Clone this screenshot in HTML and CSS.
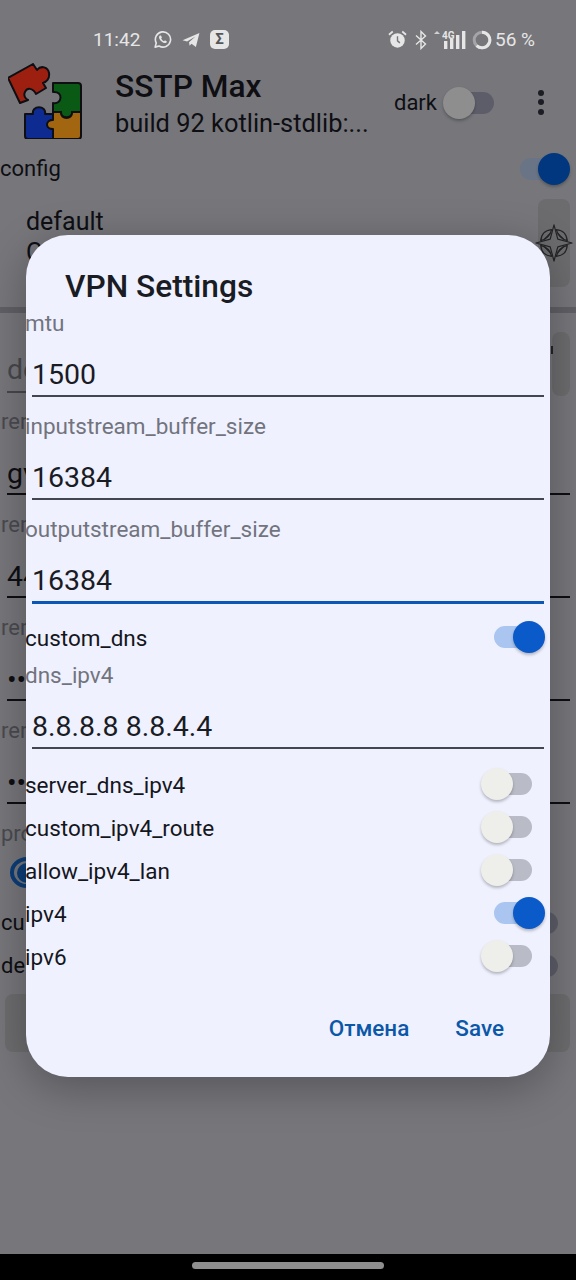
FILE: index.html
```html
<!DOCTYPE html>
<html lang="en">
<head>
<meta charset="utf-8">
<title>SSTP Max</title>
<link rel="stylesheet" href="styles.css">
</head>
<body>
<div class="screen">
  <div class="status">
    <span class="status-time">11:42</span>
    <svg class="si si-wa" viewBox="0 0 20 20"><path d="M2.2 18 3.4 13.6A8 8 0 1 1 6.4 16.8Z" fill="none" stroke="#e6e6e6" stroke-width="1.7" stroke-linejoin="round"/><path d="M7.2 5.8C6.2 6.6 6 8 7 9.8 8.2 12 10.4 13.6 12.4 13.8 13.6 13.8 14.6 13 14.6 12L12.6 10.9 11.6 11.9C10.4 11.4 9.2 10.2 8.6 9L9.4 8 8.4 5.8Z" fill="#e6e6e6"/></svg>
    <svg class="si si-tg" viewBox="0 0 20 18"><path d="M0.5 9.2 19.5 1 15.5 17 10.6 13.2 8.4 15.6 7.8 11.6 15 5 5.6 10.8Z" fill="#e6e6e6"/></svg>
    <span class="si-sigma">Σ</span>
    <span class="status-gap"></span>
    <svg class="si si-alarm" viewBox="0 0 20 20"><circle cx="10" cy="11" r="7.6" fill="#e6e6e6"/><path d="M10 6.5V11.5L12.5 13.5" fill="none" stroke="#76777c" stroke-width="1.5"/><path d="M1 5 5 1.6M19 5 15 1.6" stroke="#e6e6e6" stroke-width="1.8"/></svg>
    <svg class="si si-bt" viewBox="0 0 12 20"><path d="M1 5.5 10.5 14 6 18.5V1.5L10.5 6 1 14.5" fill="none" stroke="#e6e6e6" stroke-width="1.4"/></svg>
    <svg class="si si-signal" viewBox="0 0 33 20"><path d="M0 4 3 1 6 4Z" fill="#d0d0d0"/><text x="8" y="8.5" class="si-4g">4G</text><rect x="10" y="11" width="3.4" height="8" fill="#e6e6e6"/><rect x="16" y="9" width="3.4" height="10" fill="#e6e6e6"/><rect x="22" y="5" width="3.4" height="14" fill="#e6e6e6"/><rect x="28" y="1" width="3.4" height="18" fill="#e6e6e6"/></svg>
    <svg class="si si-ring" viewBox="0 0 20 20"><circle cx="10" cy="10" r="7.8" fill="none" stroke="#a4a5a8" stroke-width="3"/><path d="M10 2.2A7.8 7.8 0 1 1 4.6 15.6" fill="none" stroke="#e6e6e6" stroke-width="3"/></svg>
    <span class="status-batt">56 %</span>
  </div>

  <div class="app">
    <header class="app-head">
      <svg class="logo" viewBox="8 13 76 76">
        <g stroke="#15161c" stroke-width="2" stroke-linejoin="round">
          <path d="M8 28 33 14 37 20C41 15 48 17 49 23 50 29 46 32 43 33L46 38 36 44C33 38 27 37 25 42 23 46 26 49 28 50L20 53Z" fill="#e62f18"/>
          <path d="M53 33H78Q81 33 81 36V62H72C73 69 60 69 61 62H53V53C62 55 64 41 53 42Z" fill="#108520"/>
          <path d="M25 64H33C31 55 47 55 45 64H53V70C46 69 46 80 53 79V89H28Q25 89 25 86Z" fill="#1540d8"/>
          <path d="M53 70V62H61C60 70 73 70 72 62H81V86Q81 89 78 89H53V79C45 79 45 70 53 70Z" fill="#ef9618"/>
        </g>
      </svg>
      <div class="head-text">
        <div class="app-title">SSTP Max</div>
        <div class="app-sub">build 92 kotlin-stdlib:...</div>
      </div>
      <span class="text-main">dark</span>
      <span class="sw sw-off sw-dim sw-dark"><i></i></span>
      <span class="kebab"><i></i><i></i><i></i></span>
    </header>

    <div class="row-config">
      <span class="text-main">config</span>
      <span class="sw sw-on sw-dim"><i></i></span>
    </div>

    <div class="row-profile">
      <div class="profile-text">default<br>C</div>
      <div class="icon-btn">
        <svg class="compass" viewBox="0 0 40 40"><g fill="none" stroke="#35363a" stroke-width="1.3" stroke-linejoin="round"><path d="M20 1 24 16 39 20 24 24 20 39 16 24 1 20 16 16Z"/><path d="M22.5 6C30 7 33 10 34 17.5 28 16 24 12 22.5 6ZM34 22.5C33 30 30 33 22.5 34 24 28 28 24 34 22.5ZM17.5 34C10 33 7 30 6 22.5 12 24 16 28 17.5 34ZM6 17.5C7 10 10 7 17.5 6 16 12 12 16 6 17.5Z"/><path d="M24 10 30 16M30 24 24 30M16 30 10 24M10 16 16 10"/></g></svg>
      </div>
    </div>

    <div class="rule"></div>

    <div class="row-search">
      <div class="bg-value bg-faint">default</div>
      <div class="search-btn"><i></i></div>
    </div>

    <div class="bg-field"><div class="bg-label">rer</div><div class="bg-value">gv</div></div>
    <div class="bg-field"><div class="bg-label">rer</div><div class="bg-value">443</div></div>
    <div class="bg-field"><div class="bg-label">rer</div><div class="bg-value">••••</div></div>
    <div class="bg-field"><div class="bg-label">rer</div><div class="bg-value">••••</div></div>

    <div class="bg-label">pro</div>
    <div class="radio-row"><span class="radio"><i></i></span></div>
    <div class="row-bg"><span class="text-main">cu</span><span class="sw sw-off sw-dim sw-dark sw-lo"><i></i></span></div>
    <div class="row-bg"><span class="text-main">de</span><span class="sw sw-off sw-dim sw-dark sw-lo"><i></i></span></div>
    <div class="big-btn"></div>
  </div>

  <div class="navbar"><span class="nav-pill"></span></div>

  <div class="scrim"></div>

  <section class="dialog">
    <h2 class="dialog-title">VPN Settings</h2>

    <div class="field"><div class="field-label">mtu</div><div class="field-value">1500</div></div>
    <div class="field"><div class="field-label">inputstream_buffer_size</div><div class="field-value">16384</div></div>
    <div class="field field-focus"><div class="field-label">outputstream_buffer_size</div><div class="field-value">16384</div></div>

    <div class="opt"><span>custom_dns</span><span class="sw sw-on"><i></i></span></div>

    <div class="field field-tight"><div class="field-label">dns_ipv4</div><div class="field-value">8.8.8.8 8.8.4.4</div></div>

    <div class="opt"><span>server_dns_ipv4</span><span class="sw sw-off"><i></i></span></div>
    <div class="opt"><span>custom_ipv4_route</span><span class="sw sw-off"><i></i></span></div>
    <div class="opt"><span>allow_ipv4_lan</span><span class="sw sw-off"><i></i></span></div>
    <div class="opt"><span>ipv4</span><span class="sw sw-on"><i></i></span></div>
    <div class="opt"><span>ipv6</span><span class="sw sw-off"><i></i></span></div>

    <div class="actions">
      <span class="action">Отмена</span>
      <span class="action">Save</span>
    </div>
  </section>
</div>
</body>
</html>
```

FILE: styles.css
```css
* { box-sizing: border-box; }
html, body { margin: 0; padding: 0; }
body { font-family: Roboto, "Liberation Sans", sans-serif; background: #000; }

.screen {
  width: 576px;
  height: 1280px;
  position: relative;
  overflow: hidden;
  display: flex;
  flex-direction: column;
  background: #aeafb6;
  color: #15161c;
}

/* status bar sits above the scrim */
.status {
  position: relative;
  z-index: 3;
  height: 55px;
  flex: none;
  display: flex;
  align-items: center;
  padding: 24px 41px 0 93px;
  color: #e6e6e6;
  font-size: 19px;
}
.status-time { width: 60px; }
.status-gap { flex: 1; }
.status-batt { margin-left: 3px; }
.si { display: block; flex: none; }
.si-wa { width: 19px; height: 19px; }
.si-tg { width: 18px; height: 16px; margin-left: 10px; }
.si-sigma {
  width: 19px;
  height: 19px;
  margin-left: 10px;
  border-radius: 5px;
  background: #e6e6e6;
  color: #55565a;
  font-size: 15px;
  font-weight: 700;
  line-height: 19px;
  text-align: center;
}
.si-alarm { width: 19px; height: 19px; }
.si-bt { width: 12px; height: 20px; margin-left: 8px; }
.si-signal { width: 33px; height: 20px; margin-left: 7px; }
.si-4g { font-size: 10px; font-weight: 700; fill: #e6e6e6; }
.si-ring { width: 20px; height: 20px; margin-left: 5px; }

/* dimmed app behind the dialog */
.app { flex: 1; display: flex; flex-direction: column; min-height: 0; }
.app-head { height: 92px; padding-top: 4px; display: flex; align-items: center; flex: none; }
.logo { width: 76px; height: 76px; margin-left: 8px; flex: none; align-self: flex-start; margin-top: 4px; }
.head-text { width: 279px; margin-left: 31px; margin-top: 3px; flex: none; white-space: nowrap; overflow: hidden; }
.app-title { font-size: 31.7px; font-weight: 500; line-height: 37px; }
.app-sub { font-size: 25.4px; line-height: 37px; }
.text-main { font-size: 22px; line-height: 28px; }
.app-head .sw { margin-left: 7px; }
.kebab { display: flex; flex-direction: column; gap: 3.5px; margin-left: 44px; margin-top: -2px; }
.kebab i { width: 6px; height: 6px; border-radius: 50%; background: #2a2b36; }

.row-config { height: 43px; padding-top: 1px; display: flex; align-items: center; justify-content: space-between; flex: none; }
.row-profile { display: flex; justify-content: space-between; height: 88px; margin-top: 9px; flex: none; padding: 0 6px 0 26px; }
.profile-text { font-size: 25px; line-height: 31px; margin-top: 7px; }
.icon-btn { width: 32px; height: 88px; border-radius: 8px; background: #9fa0a3; position: relative; }
.compass { position: absolute; left: -3px; top: 24px; width: 38px; height: 40px; }

.rule { height: 6px; margin-top: 20px; background: #8c8d95; flex: none; }

.row-search { display: flex; align-items: flex-start; margin: 19px 6px 13px 7px; height: 64px; flex: none; gap: 7px; }
.row-search .bg-value { flex: 1; }
.bg-faint { opacity: .45; }
.search-btn { width: 18px; height: 64px; border-radius: 8px; background: #9fa0a3; display: flex; align-items: flex-start; }
.search-btn i { width: 2px; height: 8px; margin: 14px 0 0 -1px; background: #35363a; }

.bg-field { height: 103px; flex: none; padding: 0; }
.bg-label { font-size: 22px; line-height: 26px; color: #6d6e75; padding-left: 1px; flex: none; }
.bg-value {
  height: 46px;
  margin: 14px 6px 0 7px;
  font-size: 28.5px;
  line-height: 50px;
  border-bottom: 2px solid #15161c;
  white-space: nowrap;
}
.row-search .bg-value { margin: 16px 0 0; height: 45px; line-height: 44px; }
.radio-row { height: 31px; margin-top: 10px; flex: none; padding-left: 10px; }
.radio { display: flex; align-items: center; justify-content: center; width: 34px; height: 31px; border-radius: 50%; border: 4px solid #125ab0; }
.radio i { width: 20px; height: 20px; border-radius: 50%; background: #125ab0; }
.row-bg { height: 43px; display: flex; align-items: center; justify-content: space-between; padding-left: 1px; flex: none; }
.radio-row + .row-bg { margin-top: 13px; }
.big-btn { height: 58px; margin: 7px 6px 0 5px; border-radius: 8px; background: #9fa0a3; flex: none; }

.navbar { height: 26px; flex: none; background: #000; position: relative; z-index: 3; display: flex; justify-content: center; padding-top: 8px; }
.nav-pill { width: 192px; height: 7px; border-radius: 4px; background: #8e8e8e; }

.scrim { position: absolute; inset: 0; background: rgba(0, 0, 0, .32); z-index: 1; }

/* dialog */
.dialog {
  position: absolute;
  left: 26px;
  top: 235px;
  width: 524px;
  height: 842px;
  z-index: 2;
  border-radius: 42px;
  background: #eff1ff;
  box-shadow: 0 10px 44px rgba(0, 0, 0, .28);
  display: flex;
  flex-direction: column;
  color: #1a1c24;
}
.dialog-title { margin: 32px 0 3px 39px; font-size: 31.7px; line-height: 40px; font-weight: 500; }
.field { height: 103px; flex: none; }
.field-label { font-size: 22.5px; line-height: 26px; color: #72747d; white-space: nowrap; margin-left: -1px; }
.field-value {
  height: 47px;
  margin: 14px 6px 0;
  font-size: 28.5px;
  line-height: 50px;
  border-bottom: 2px solid #44464f;
  white-space: nowrap;
}
.field-focus { height: 99px; }
.field-focus .field-value { border-bottom: 3px solid #0b57b5; height: 48px; }
.field-tight { height: 100px; margin-top: 4px; }

.opt { height: 43px; flex: none; display: flex; align-items: center; justify-content: space-between; font-size: 22.5px; color: #15161c; }
.opt > span:first-child { padding-top: 3px; margin-left: -1px; }

.sw { display: block; position: relative; width: 50px; height: 22px; border-radius: 11px; flex: none; }
.sw i { position: absolute; top: -5px; width: 32px; height: 32px; border-radius: 50%; box-shadow: 0 2px 3px rgba(0, 0, 0, .25); }
.sw-off { margin-right: 18px; background: #b9bcc7; }
.sw-off i { left: -1px; background: #eeeeea; }
.sw-on { margin-right: 6px; background: #a9c5f0; }
.sw-on i { right: -1px; background: #0a5ac9; }
.sw-dim.sw-on { margin-right: 6px; background: #9cacc8; }
.sw-dim.sw-on i { right: 0; background: #0051ba; }
.sw-dark { background: #898a9c; }
.sw-dark i { background: #d1d1d1; }
.sw-lo { margin-right: 18px; }
.app-head .sw-dark { margin-right: 0; }

.actions { margin-top: auto; display: flex; justify-content: flex-end; gap: 46px; padding: 0 46px 34px 0; }
.action { font-size: 22.5px; line-height: 30px; font-weight: 500; color: #0b57a8; }
```
